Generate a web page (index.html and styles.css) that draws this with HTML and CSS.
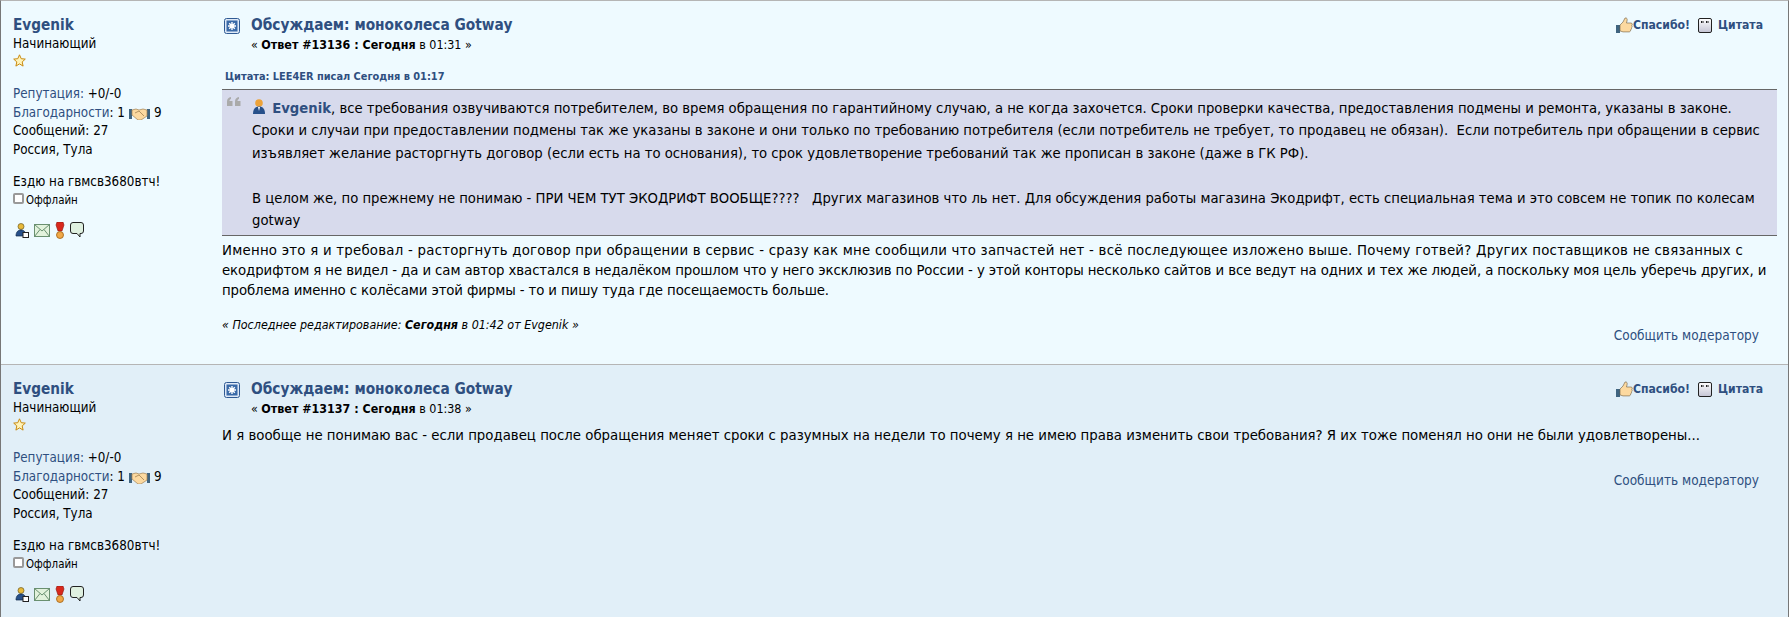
FILE: index.html
```html
<!DOCTYPE html>
<html lang="ru">
<head>
    <meta charset="UTF-8">
    <title>Обсуждаем: моноколеса Gotway</title>
    <link rel="stylesheet" href="styles.css">
</head>
<body>
    <svg class="sprites" width="0" height="0">
        <defs>
            <linearGradient id="g-quote" x1="0" y1="0" x2="0" y2="1">
                <stop offset="0" stop-color="#fff"/>
                <stop offset="1" stop-color="#c4c4d4"/>
            </linearGradient>
        </defs>
        <symbol id="i-star" viewBox="0 0 13 13">
            <path d="M6.5.8 8.200 4.700l4.100.4-3.100 2.800.9 4.200-3.600-2.200-3.600 2.200.9-4.200L.7 5.100l4.100-.4z" fill="#fff3b8" stroke="#c98a10"/>
        </symbol>
        <symbol id="i-hands" viewBox="0 0 21 13">
            <path d="M0 2h3v10H0zM18 2h3v10h-3z" fill="#3f6480"/>
            <path d="M3 3l4-1 3 1 4-1 4 1v6l-6 4H9L3 8z" fill="#fcd9a0" stroke="#a08050" stroke-width=".7"/>
            <path d="M6 6l4-2 5 5" fill="none" stroke="#a08050" stroke-width=".8"/>
        </symbol>
        <symbol id="i-post" viewBox="0 0 16 16">
            <rect x=".5" y=".5" width="15" height="15" rx="2" fill="#dfe9f7" stroke="#2f5a94"/>
            <rect x="2.500" y="2.500" width="11" height="11" fill="#3a6aa8"/>
            <path d="M8 4v8M4 8h8M5.200 5.200l5.600 5.600M10.800 5.200l-5.600 5.600" stroke="#fff" stroke-width="1.400"/>
        </symbol>
        <symbol id="i-thumb" viewBox="0 0 17 17">
            <path d="M0 8h4v8H0z" fill="#3f6480"/>
            <path d="M4 8l3-3 2-4c2-.5 2.500 1 2 3l-.5 2H15c1.500 0 1.500 2 .8 2.500.6.800.4 2-.4 2.400.3.900-.1 1.800-.8 2 .1 1-.5 2-1.600 2H7l-3-1z" fill="#fcd9a0" stroke="#6b5a40" stroke-width=".6"/>
        </symbol>
        <symbol id="i-quote" viewBox="0 0 14 15">
            <rect x=".5" y=".5" width="13" height="14" rx="1.500" fill="url(#g-quote)" stroke="#222"/>
            <path d="M3.500 3v2M5 3v2M8.500 3v2M10 3v2" stroke="#222"/>
        </symbol>
        <symbol id="i-profile" viewBox="0 0 14 15">
            <circle cx="6" cy="3.500" r="3" fill="#e8b93a" stroke="#6b5a20" stroke-width=".7"/>
            <path d="M1 13c0-4 2-6 5-6s5 2 5 6z" fill="#27508a" stroke="#10294a" stroke-width=".7"/>
            <rect x="8" y="9.500" width="5.500" height="5" fill="#fff" stroke="#222"/>
        </symbol>
        <symbol id="i-mail" viewBox="0 0 16 13">
            <rect x=".5" y=".5" width="15" height="12" fill="#e2f2dc" stroke="#6a9070"/>
            <path d="M.5.5 8 7l7.500-6.500M.5 12.500 6 5.500M15.500 12.500 10 5.500" fill="none" stroke="#6a9070"/>
        </symbol>
        <symbol id="i-medal" viewBox="0 0 10 17">
            <path d="M2 0h6l1 3-1 3-1 3H3L2 6 1 3z" fill="#d8281c" stroke="#8c1810" stroke-width=".6"/>
            <circle cx="5" cy="13" r="3.500" fill="#f0a848" stroke="#a06010" stroke-width=".8"/>
        </symbol>
        <symbol id="i-chat" viewBox="0 0 14 16">
            <path d="M3 .5h8A2.500 2.500 0 0 1 13.500 3v6a2.500 2.500 0 0 1-2.500 2.500h-1V15L7 11.500H3A2.500 2.500 0 0 1 .5 9V3A2.500 2.500 0 0 1 3 .5z" fill="#dff0e0" stroke="#222"/>
        </symbol>
        <symbol id="i-user" viewBox="0 0 14 16">
            <circle cx="7" cy="4" r="3.800" fill="#eda33a"/>
            <path d="M1 15c0-5 2-7.500 6-7.500s6 2.500 6 7.500z" fill="#27508a"/>
            <path d="M6 8h2l-1 4z" fill="#fff"/>
        </symbol>
        <symbol id="i-marks" viewBox="0 0 14 9">
            <path d="M0 9V4.500C0 2 1.500.5 4 0v2C3 2.300 2.500 3 2.500 4H5.500v5zM8 9V4.500C8 2 9.500.5 12 0v2c-1 .3-1.500 1-1.500 2H13.500v5z" fill="#aaa"/>
        </symbol>
    </svg>

    <div class="forum">
        <div class="post light">
            <div class="poster">
                <h4><a href="#">Evgenik</a></h4>
                <ul class="info">
                    <li>Начинающий</li>
                    <li class="stars"><svg width="13" height="13"><use href="#i-star"/></svg></li>
                    <li class="gap"><a href="#">Репутация:</a> +0/-0</li>
                    <li><a href="#">Благодарности</a>: 1<svg class="hands" width="21" height="13"><use href="#i-hands"/></svg>9</li>
                    <li>Сообщений: 27</li>
                    <li>Россия, Тула</li>
                    <li class="gap">Ездю на гвмсв3680втч!</li>
                    <li class="status"><span class="off"></span>Оффлайн</li>
                    <li class="tools">
                        <svg width="14" height="15"><use href="#i-profile"/></svg>
                        <svg width="16" height="13"><use href="#i-mail"/></svg>
                        <svg width="10" height="17"><use href="#i-medal"/></svg>
                        <svg width="14" height="16"><use href="#i-chat"/></svg>
                    </li>
                </ul>
            </div>
            <div class="postarea">
                <div class="head">
                    <svg class="post-icon" width="16" height="16"><use href="#i-post"/></svg>
                    <div class="subject">
                        <h5><a href="#">Обсуждаем: моноколеса Gotway</a></h5>
                        <div class="smalltext">« <b>Ответ #13136 : Сегодня</b> в 01:31 »</div>
                    </div>
                    <div class="buttons">
                        <svg width="17" height="17"><use href="#i-thumb"/></svg><a href="#">Спасибо!</a>
                        <svg class="q" width="14" height="15"><use href="#i-quote"/></svg><a href="#">Цитата</a>
                    </div>
                </div>
                <div class="quote-head"><a href="#">Цитата: LEE4ER писал Сегодня в 01:17</a></div>
                <blockquote>
                    <svg class="marks" width="14" height="9"><use href="#i-marks"/></svg>
                    <svg class="user" width="14" height="16"><use href="#i-user"/></svg>
                    <a href="#">Evgenik</a>, все требования озвучиваются потребителем, во время обращения по гарантийному случаю, а не когда захочется. Сроки проверки качества, предоставления подмены и ремонта, указаны в законе.<br>
                    Сроки и случаи при предоставлении подмены так же указаны в законе и они только по требованию потребителя (если потребитель не требует, то продавец не обязан).&nbsp; Если потребитель при обращении в сервис изъявляет желание расторгнуть договор (если есть на то основания), то срок удовлетворение требований так же прописан в законе (даже в ГК РФ).<br><br>
                    В целом же, по прежнему не понимаю - ПРИ ЧЕМ ТУТ ЭКОДРИФТ ВООБЩЕ????&nbsp;&nbsp; Других магазинов что ль нет. Для обсуждения работы магазина Экодрифт, есть специальная тема и это совсем не топик по колесам gotway
                </blockquote>
                <div class="inner">
                    <span class="line wide">Именно это я и требовал - расторгнуть договор при обращении в сервис - сразу как мне сообщили что запчастей нет - всё последующее изложено выше. Почему готвей? Других поставщиков не связанных с</span>
                    <span class="line snug">екодрифтом я не видел - да и сам автор хвастался в недалёком прошлом что у него эксклюзив по России - у этой конторы несколько сайтов и все ведут на одних и тех же людей, а поскольку моя цель уберечь других, и</span>
                    <span class="line tight">проблема именно с колёсами этой фирмы - то и пишу туда где посещаемость больше.</span>
                </div>
                <div class="modified">« Последнее редактирование: <b>Сегодня</b> в 01:42 от Evgenik »</div>
                <div class="report"><a href="#">Сообщить модератору</a></div>
            </div>
        </div>

        <div class="post dark">
            <div class="poster">
                <h4><a href="#">Evgenik</a></h4>
                <ul class="info">
                    <li>Начинающий</li>
                    <li class="stars"><svg width="13" height="13"><use href="#i-star"/></svg></li>
                    <li class="gap"><a href="#">Репутация:</a> +0/-0</li>
                    <li><a href="#">Благодарности</a>: 1<svg class="hands" width="21" height="13"><use href="#i-hands"/></svg>9</li>
                    <li>Сообщений: 27</li>
                    <li>Россия, Тула</li>
                    <li class="gap">Ездю на гвмсв3680втч!</li>
                    <li class="status"><span class="off"></span>Оффлайн</li>
                    <li class="tools">
                        <svg width="14" height="15"><use href="#i-profile"/></svg>
                        <svg width="16" height="13"><use href="#i-mail"/></svg>
                        <svg width="10" height="17"><use href="#i-medal"/></svg>
                        <svg width="14" height="16"><use href="#i-chat"/></svg>
                    </li>
                </ul>
            </div>
            <div class="postarea">
                <div class="head">
                    <svg class="post-icon" width="16" height="16"><use href="#i-post"/></svg>
                    <div class="subject">
                        <h5><a href="#">Обсуждаем: моноколеса Gotway</a></h5>
                        <div class="smalltext">« <b>Ответ #13137 : Сегодня</b> в 01:38 »</div>
                    </div>
                    <div class="buttons">
                        <svg width="17" height="17"><use href="#i-thumb"/></svg><a href="#">Спасибо!</a>
                        <svg class="q" width="14" height="15"><use href="#i-quote"/></svg><a href="#">Цитата</a>
                    </div>
                </div>
                <div class="inner second">И я вообще не понимаю вас - если продавец после обращения меняет сроки с разумных на недели то почему я не имею права изменить свои требования? Я их тоже поменял но они не были удовлетворены...</div>
                <div class="report second-report"><a href="#">Сообщить модератору</a></div>
            </div>
        </div>
    </div>
</body>
</html>
```

FILE: styles.css
```css
html, body {
    margin: 0;
    padding: 0;
}
body {
    font-family: "DejaVu Sans Condensed", "DejaVu Sans", sans-serif;
    font-size: 14.8px;
    color: #000;
    overflow: hidden;
    height: 617px;
}
a {
    color: #2f4f80;
    text-decoration: none;
}
.sprites {
    position: absolute;
}
.forum {
    border-top: 1px solid #b5b5b5;
    border-left: 1px solid #777;
    border-right: 1px solid #777;
}
.post {
    display: flex;
    border-bottom: 1px solid #b5b5b5;
}
.light {
    background: #eefaff;
    height: 363px;
}
.dark {
    background: #e1eff8;
    height: 252px;
    border-bottom: 0;
}
.poster {
    width: 209px;
    padding: 14px 0 0 12px;
    flex: none;
}
.poster h4 {
    margin: 0;
    font-size: 15.2px;
    line-height: 20px;
}
.info {
    list-style: none;
    margin: 0;
    padding: 0;
    font-size: 13.3px;
    line-height: 18.4px;
}
.info li {
    white-space: nowrap;
}
.info .gap {
    margin-top: 14px;
}
.info .stars {
    height: 18px;
}
.stars svg {
    vertical-align: -1px;
}
.hands {
    vertical-align: -3px;
    margin: 0 4px;
}
.info .status {
    font-size: 11.4px;
}
.off {
    display: inline-block;
    width: 7px;
    height: 7px;
    border: 2px solid #999;
    border-radius: 2px;
    background: #fff;
    margin-right: 2px;
}
.info .tools {
    margin-top: 12px;
    display: flex;
    align-items: center;
    gap: 5px;
    padding-left: 2px;
}
.postarea {
    flex: 1;
    min-width: 0;
    padding-right: 11px;
}
.head {
    display: flex;
    padding-top: 14px;
}
.post-icon {
    margin: 3px 11px 0 2px;
    flex: none;
}
.subject {
    flex: 1;
}
.subject h5 {
    margin: 0;
    font-size: 15.3px;
    line-height: 20px;
}
.smalltext {
    font-size: 12.4px;
    line-height: 20px;
}
.buttons {
    display: flex;
    align-items: center;
    height: 20px;
    font-size: 12.1px;
    font-weight: bold;
    padding-right: 14px;
}
.buttons .q {
    margin: 0 6px 0 8px;
}
.quote-head {
    font-size: 10.9px;
    font-weight: bold;
    line-height: 14px;
    margin: 15px 0 5px 3px;
}
blockquote {
    margin: 0;
    background: #d7daec;
    border-top: 1px solid #666;
    border-bottom: 1px solid #666;
    padding: 7px 12px 0 30px;
    font-size: 14.7px;
    line-height: 22.4px;
    height: 138px;
    position: relative;
}
blockquote a {
    font-weight: bold;
}
.marks {
    position: absolute;
    left: 5px;
    top: 7px;
}
.user {
    vertical-align: -2px;
    margin-right: 2px;
}
.inner {
    line-height: 20px;
    padding-top: 4px;
}
.inner.second {
    padding-top: 6px;
}
.line {
    display: block;
    white-space: nowrap;
}
.wide {
    letter-spacing: .25px;
}
.snug {
    letter-spacing: -.09px;
}
.tight {
    letter-spacing: -.1px;
}
.modified {
    font-size: 12.4px;
    font-style: italic;
    margin-top: 17px;
    line-height: 16px;
}
.report {
    text-align: right;
    font-size: 13.5px;
    line-height: 18px;
    margin-top: -7px;
    padding-right: 18px;
}
.second-report {
    margin-top: 26px;
}
```
